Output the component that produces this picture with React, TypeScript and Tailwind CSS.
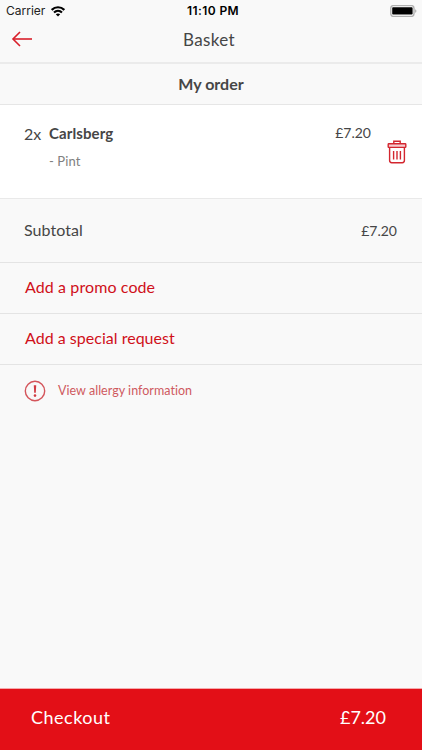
import React from 'react';

interface ActionRowProps {
  label: string;
  className?: string;
}

function WifiIcon() {
  return (
    <svg width="14" height="11" viewBox="0 0 14 11" fill="none" stroke="#000" strokeWidth="2.1">
      <path d="M0.7 3.9C4.2 0.4 9.8 0.4 13.3 3.9" />
      <path d="M3 6.5C5.3 4.3 8.7 4.3 11 6.5" />
      <path d="M7 10.6L4.8 8.3C6.1 7.2 7.9 7.2 9.2 8.3Z" fill="#000" stroke="none" />
    </svg>
  );
}

function BatteryIcon() {
  return (
    <svg width="27" height="12" viewBox="0 0 27 12">
      <rect x="0.8" y="0.6" width="23.2" height="10.8" rx="2.6" fill="#fff" stroke="#b0b0b0" strokeWidth="1.4" />
      <rect x="2.2" y="2.2" width="20.4" height="7.4" rx="0.8" fill="#000" />
      <path d="M25.2 4.2C26.8 4.6 26.8 7.4 25.2 7.8Z" fill="#a9a9a9" />
    </svg>
  );
}

function BackIcon() {
  return (
    <svg width="22" height="16" viewBox="0 0 22 16" fill="none" stroke="#d81f2a" strokeWidth="1.6">
      <path d="M21 8H2" />
      <path d="M9 1L2 8L9 15" />
    </svg>
  );
}

function TrashIcon() {
  return (
    <svg width="20" height="24" viewBox="0 0 20 24" fill="none" stroke="#d3262f" strokeWidth="1.4">
      <path d="M6.8 3.6V1.2H13.2V3.6" />
      <rect x="1.2" y="3.8" width="17.6" height="3.6" rx="0.6" fill="#f6cdd0" />
      <path d="M2.6 7.4V20.6C2.6 21.9 3.4 22.7 4.7 22.7H15.3C16.6 22.7 17.4 21.9 17.4 20.6V7.4" />
      <path d="M6.6 11V19.4M10 11V19.4M13.4 11V19.4" />
    </svg>
  );
}

function AlertIcon() {
  return (
    <svg width="22" height="22" viewBox="0 0 22 22" fill="none">
      <circle cx="11" cy="11" r="9.7" stroke="#d4555b" strokeWidth="1.4" />
      <path d="M9.8 5.2H12.2L11.8 12.8H10.2Z" fill="#d13b42" />
      <circle cx="11" cy="15.6" r="1.3" fill="#d13b42" />
    </svg>
  );
}

function ActionRow({ label, className = '' }: ActionRowProps) {
  return (
    <button
      className={`flex h-[51px] w-full items-center border-b border-[#e4e4e4] px-[25px] pb-[2px] text-left text-[16px] text-[#d0101a] ${className}`}
    >
      {label}
    </button>
  );
}

export default function App() {
  return (
    <div className="flex h-[750px] w-[422px] flex-col bg-[#f9f9f9] font-['Lato',sans-serif] text-[#464646] [font-variant-ligatures:none]">
      {/* Status bar */}
      <div className="grid h-[22px] grid-cols-3 items-center pl-[6px] pr-[5px] font-['Inter',sans-serif] text-[12px] text-black">
        <div className="flex items-center gap-[6px]">
          <span className="text-[#222]">Carrier</span>
          <WifiIcon />
        </div>
        <span className="whitespace-nowrap pl-[3px] text-center font-semibold tracking-[0.4px]">11:10 PM</span>
        <div className="flex justify-end">
          <BatteryIcon />
        </div>
      </div>

      <header className="grid h-[42px] grid-cols-3 items-center border-b-2 border-[#ebebeb] px-[11px] pb-[6px]">
        <button aria-label="Back">
          <BackIcon />
        </button>
        <h1 className="pr-[4px] pt-[1px] text-center text-[17px] tracking-[0.4px]">Basket</h1>
      </header>

      <h2 className="flex h-[41px] items-center justify-center border-b border-[#e6e6e6] text-[16px] font-bold">
        My order
      </h2>

      <div className="flex h-[94px] items-start border-b border-[#e9e9e9] bg-white pl-[24px] pr-[15px]">
        <span className="mt-[17px] w-[25px] text-[16px] leading-[24px]">2x</span>
        <div className="mt-[16px] flex-1">
          <p className="text-[15px] font-bold leading-[24px] tracking-[0.1px]">Carlsberg</p>
          <p className="mt-[4px] text-[13px] leading-[24px] tracking-[0.1px] text-[#808080]">- Pint</p>
        </div>
        <span className="mt-[16px] text-[14px] leading-[24px]">£7.20</span>
        <button className="ml-[16px] mt-[35px]" aria-label="Remove">
          <TrashIcon />
        </button>
      </div>

      <div className="flex h-[64px] items-center justify-between border-b border-[#e4e4e4] pl-[24px] pr-[25px] pb-[1px]">
        <span className="text-[16px] tracking-[0.05px]">Subtotal</span>
        <span className="text-[14px]">£7.20</span>
      </div>

      <ActionRow label="Add a promo code" className="tracking-[0.1px]" />
      <ActionRow label="Add a special request" className="tracking-[0.02px]" />

      <div className="flex h-[51px] items-center gap-[12px] px-[24px] text-[12.5px] text-[#cf5a60]">
        <AlertIcon />
        <span className="pt-[1px] tracking-[0.03px]">View allergy information</span>
      </div>

      <button className="mt-auto flex h-[62px] items-center justify-between border-t border-[#f5a9ac] bg-[#e30f17] pb-[5px] pl-[31px] pr-[36px] text-[18px] text-white">
        <span className="tracking-[0.5px]">Checkout</span>
        <span>£7.20</span>
      </button>
    </div>
  );
}
